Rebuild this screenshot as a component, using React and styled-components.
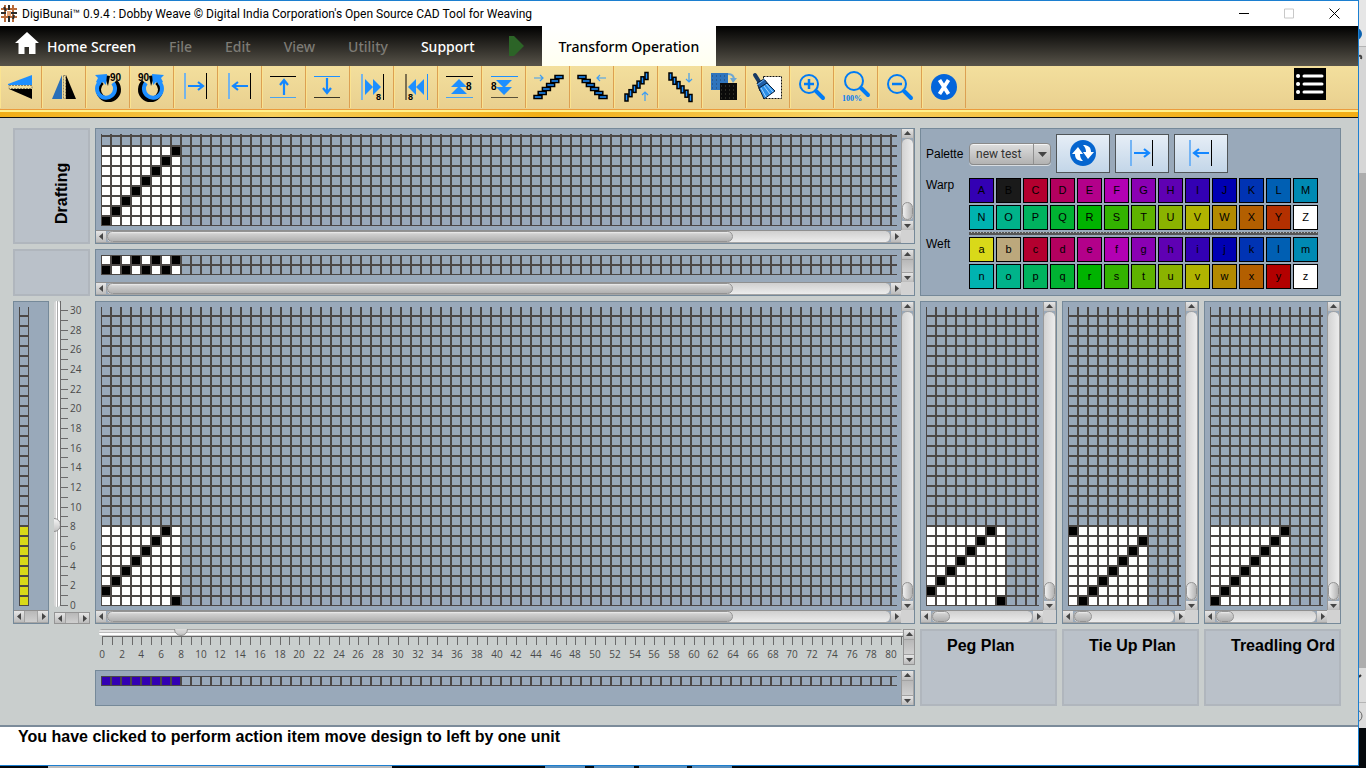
import React from "react";
import styled, { createGlobalStyle, css } from "styled-components";

const GlobalStyle = createGlobalStyle`
  *, *::before, *::after { box-sizing: border-box; }
  body { margin: 0; background: #05080c; font-family: "Open Sans", "Noto Sans", sans-serif; color: #000; }
  button, select, input { font: inherit; margin: 0; }
  svg { display: block; }
`;

const uiFont = `"Open Sans", "Noto Sans", sans-serif`;
const menuFont = `"Noto Sans", "Open Sans", sans-serif`;
const titleFont = `Roboto, "Open Sans", sans-serif`;
const arial = `"Liberation Sans", Arial, sans-serif`;
const blue = "#1e8fff";
const lightBlue = "#74b4ea";

/* ---------- window frame ---------- */

const Desktop = styled.div`
  display: grid;
  grid-template-columns: minmax(0, 1fr) 7px;
  grid-template-rows: 1fr 2px;
  min-height: 100vh;
`;

const Window = styled.div`
  display: flex;
  flex-direction: column;
  border: 1px solid #1c7fd0;
  border-left: 0;
  background: #fff;
`;

const Backdrop = styled.div`
  display: flex;
  flex-direction: column;
  background: #05080c;
`;

const BackdropBand = styled.div`
  height: ${(p) => p.$h}px;
  background: ${(p) => p.$c};
  overflow: hidden;
`;

const Taskbar = styled.div`
  grid-column: 1 / -1;
  display: flex;
  background: #05080c;
`;

const TaskbarBand = styled.div`
  width: ${(p) => p.$w}px;
  background: ${(p) => p.$c};
`;

const TitleBar = styled.header`
  display: flex;
  align-items: center;
  height: 25px;
  padding: 0 18px 0 1px;
  background: #fff;
`;

const Title = styled.h1`
  flex: 1;
  margin: 0 0 0 5px;
  font: 400 12px/16px ${titleFont};
  white-space: nowrap;
`;

const CaptionButtons = styled.div`
  display: flex;
  gap: 35px;
`;

const CaptionButton = styled.button`
  padding: 0;
  border: 0;
  background: none;
`;

/* ---------- menu bar ---------- */

const MenuBar = styled.nav`
  display: flex;
  align-items: center;
  height: 40px;
  background: linear-gradient(#000, #58544a);
`;

const MenuItem = styled.button`
  display: flex;
  align-items: center;
  gap: 8px;
  padding: 2px 0 0;
  margin-right: 33px;
  border: 0;
  background: none;
  color: ${(p) => (p.$dim ? "#7d7b75" : "#fff")};
  font: 500 14px/20px ${menuFont};
  white-space: nowrap;
`;

const MenuTab = styled.button`
  height: 40px;
  padding: 2px 17px 0;
  border: 0;
  background: linear-gradient(#fff, #fffff0);
  font: 500 14px/20px ${menuFont};
  white-space: nowrap;
`;

/* ---------- toolbar ---------- */

const ToolBar = styled.div`
  display: flex;
  height: 44px;
  border-bottom: 1px solid #eb9c3c;
  background: linear-gradient(#f3df9d, #e9d08f);
`;

const ToolButton = styled.button`
  flex: none;
  width: ${(p) => (p.$first ? 42 : 44)}px;
  height: 42px;
  padding: 0;
  border: 0;
  border-right: 1px solid #dca052;
  box-shadow: inset 1px 0 #fae391;
  background: none;
`;

const ListButton = styled.button`
  width: 32px;
  height: 32px;
  margin: 2px 32px 0 auto;
  padding: 0;
  border: 0;
  background: #000;
`;

const GoldStripe = styled.div`
  height: 8px;
  border-top: 2px solid #fff08c;
  border-bottom: 1px solid #111;
  background: linear-gradient(90deg, #f2ae16, #f7cf5a 20%, #f2ae16 40%, #f7d264 62%, #f2ae16 90%);
`;

/* ---------- work area ---------- */

const WorkArea = styled.main`
  flex: 1;
  display: grid;
  grid-template-columns: 77px minmax(0, 1fr) 421px;
  grid-template-rows: 116px 47px 323px 36px 36px;
  gap: 5px;
  padding: 10px 17px 19px 13px;
  background: #c9cecd;
`;

const LabelPanel = styled.section`
  border: 2px solid #b0b6bd;
  background: #bac1c9;
`;

const PlanLabel = styled.h2`
  margin: 5px 0 0 25px;
  font: 700 16px/20px ${arial};
  white-space: nowrap;
`;

const SideTitle = styled.h2`
  margin: 0;
  height: 100%;
  padding: 18px 37px 0 0;
  writing-mode: vertical-rl;
  transform: rotate(180deg);
  font: 700 16px/20px ${arial};
`;

const Panel = styled.section`
  display: grid;
  grid-column: ${(p) => p.$col || "auto"};
  grid-template-columns: minmax(0, 1fr) ${(p) => (p.$v ? "13px" : "")};
  grid-template-rows: minmax(0, 1fr) ${(p) => (p.$h ? "13px" : "")};
  border: 1px solid #758999;
  background: #99a9ba;
`;

const Canvas = styled.div`
  padding: 5px 4px 0 5px;
  overflow: hidden;
`;

const Corner = styled.div`
  background: #d2d2d2;
`;

const Plans = styled.div`
  display: grid;
  grid-template-columns: repeat(3, 1fr);
  gap: 5px;
  grid-row: ${(p) => p.$row};
  grid-column: 3;
`;

const LeftTools = styled.div`
  display: grid;
  grid-template-columns: 36px 36px;
  gap: 5px;
`;

const CrossRuler = styled.div`
  grid-column: 2;
  display: grid;
  grid-template-columns: minmax(0, 1fr) 12px;
`;

const DownRuler = styled.div`
  display: grid;
  grid-template-rows: 311px 12px;
`;

const DownScale = styled.div`
  display: flex;
`;

/* ---------- scroll bars ---------- */

const Bar = styled.div`
  display: flex;
  flex-direction: ${(p) => (p.$vertical ? "column" : "row")};
  min-width: 0;
  min-height: 0;
  ${(p) =>
    p.$vertical
      ? "border-left: 1px solid #9a9a9a; border-right: 1px solid #a5a5a5;"
      : "border-top: 1px solid #8f8f8f; border-bottom: 1px solid #a5a5a5;"}
  ${(p) => p.$boxed && "border: 1px solid #949494;"}
`;

const ArrowButton = styled.button`
  flex: none;
  display: grid;
  place-items: center;
  ${(p) => (p.$vertical ? "height: 9px;" : "width: 10px;")}
  padding: 0;
  border: 0;
  background: linear-gradient(#e6e6e6, #bcbcbc);
`;

const Track = styled.div`
  flex: 1;
  display: flex;
  flex-direction: ${(p) => (p.$vertical ? "column" : "row")};
  justify-content: ${(p) => (p.$end ? "flex-end" : "flex-start")};
  min-height: 0;
  border: 1px solid #a2a2a2;
  ${(p) => (p.$vertical ? "border-left: 0; border-right: 0;" : "border-top: 0; border-bottom: 0;")}
  border-radius: ${(p) => (p.$empty ? 0 : 6)}px;
  background: ${(p) =>
    p.$empty
      ? "linear-gradient(#b8b8b8, #cfcfcf)"
      : p.$vertical
      ? "linear-gradient(90deg, #d2d2d2, #ececec)"
      : "linear-gradient(#d0d0d0, #ececec)"};
`;

const Thumb = styled.div`
  ${(p) => (p.$vertical ? "height" : "width")}: ${(p) => p.$size};
  border: 1px solid #939393;
  border-radius: 6px;
  background: ${(p) =>
    p.$vertical ? "linear-gradient(90deg, #f0f0f0, #b4b4b4)" : "linear-gradient(#f0f0f0, #d0d0d0 20%, #b0b0b0)"};
`;

const arrowPaths = {
  left: "M6 1v7L2 4.500z",
  right: "M3 1v7l4-3.500z",
  up: "M1 6h7L4.500 2z",
  down: "M1 3h7L4.500 7z",
};

function Arrow({ dir, vertical }) {
  return (
    <ArrowButton type="button" aria-label={`Scroll ${dir}`} $vertical={vertical}>
      <svg width="9" height="9" viewBox="0 0 9 9">
        <path d={arrowPaths[dir]} fill="#454545" />
      </svg>
    </ArrowButton>
  );
}

function ScrollBar({ vertical, thumb, end, boxed }) {
  return (
    <Bar $vertical={vertical} $boxed={boxed}>
      <Arrow dir={vertical ? "up" : "left"} vertical={vertical} />
      <Track $vertical={vertical} $empty={!thumb} $end={end}>
        {thumb && <Thumb $vertical={vertical} $size={thumb} />}
      </Track>
      <Arrow dir={vertical ? "down" : "right"} vertical={vertical} />
    </Bar>
  );
}

/* ---------- weave charts ---------- */

const CELL = 10;

function Weave({ id, height, width = "100%", cols = 8, rows = 8, fill = "#fff", isMarked }) {
  const cells = [];
  for (let c = 0; c < cols; c += 1) {
    for (let r = 0; r < rows; r += 1) {
      cells.push(
        <rect
          key={`${c}-${r}`}
          x={c * CELL + 1}
          y={height - (r + 1) * CELL + 1}
          width="8"
          height="8"
          fill={isMarked && isMarked(c, r) ? "#000" : fill}
        />
      );
    }
  }
  return (
    <svg width={width} height={height} shapeRendering="crispEdges">
      <defs>
        <pattern id={id} width={CELL} height={CELL} y={height % CELL} patternUnits="userSpaceOnUse">
          <path d="M0 0h10v10H0zM1 1v8h8V1z" fill="#4c4846" fillRule="evenodd" />
        </pattern>
      </defs>
      <rect width="100%" height={height} fill={`url(#${id})`} />
      {cells}
    </svg>
  );
}

/* ---------- rulers ---------- */

const sliderBase = css`
  appearance: none;
  display: block;
  overflow: hidden;
  border-radius: 4px;
  &::-webkit-slider-thumb {
    appearance: none;
    width: 14px;
    height: 14px;
    border: 1px solid #8f8f8f;
    border-radius: 50%;
    background: linear-gradient(#f4f4f4, #c4c4c4);
  }
`;

const CrossSlider = styled.input`
  ${sliderBase}
  width: calc(100% - 4px);
  height: 7px;
  margin-left: 4px;
  background: linear-gradient(#a5a5a5 1px, #e4e4e4 1px 3px, #bbb 3px 4px, #fff 4px 6px, #d0d0d0 6px);
  &::-webkit-slider-thumb { margin-top: -7px; }
`;

const DownSlider = styled.input`
  ${sliderBase}
  writing-mode: vertical-lr;
  direction: rtl;
  width: 6px;
  height: 306px;
  background: linear-gradient(90deg, #d8d8d8 2px, #fff 2px 3px, #aaa 3px 4px, #fff 4px);
  &::-webkit-slider-thumb { margin-left: -7px; }
`;

const ScaleText = styled.text`
  font: 400 10px ${uiFont};
  fill: #4a4a4a;
`;

function CrossScale() {
  const ticks = Array.from({ length: 82 }, (_, i) => i);
  const at = (i) => Math.round((i * 789) / 80) + 7;
  return (
    <svg width="100%" height="29" shapeRendering="crispEdges">
      <rect x="7" width="801" height="1" fill="#6a6a6a" />
      {ticks.map((i) => (
        <rect key={i} x={at(i)} width="1" height="9" fill="#6a6a6a" />
      ))}
      {ticks
        .filter((i) => i % 2 === 0)
        .map((i) => (
          <ScaleText key={i} x={at(i)} y="22" textAnchor="middle">
            {i}
          </ScaleText>
        ))}
    </svg>
  );
}

function DownTicks() {
  const ticks = Array.from({ length: 31 }, (_, i) => i);
  const at = (i) => 304 - Math.round((i * 295) / 30);
  return (
    <svg width="30" height="311" shapeRendering="crispEdges">
      <rect width="1" height="305" fill="#6a6a6a" />
      {ticks.map((i) => (
        <rect key={i} y={at(i)} width="8" height="1" fill="#6a6a6a" />
      ))}
      {ticks
        .filter((i) => i % 2 === 0)
        .map((i) => (
          <ScaleText key={i} x="10" y={at(i) + 4}>
            {i}
          </ScaleText>
        ))}
    </svg>
  );
}

/* ---------- palette ---------- */

const PalettePanel = styled.section`
  grid-column: 3;
  grid-row: 1 / 3;
  display: grid;
  grid-template-columns: 43px minmax(0, 1fr);
  align-content: start;
  padding: 5px 0 0 5px;
  border: 1px solid #758999;
  background: #99a9ba;
  font: 400 12px/14px ${arial};
`;

const PaletteLabel = styled.label`
  padding-top: ${(p) => p.$top}px;
`;

const PaletteControls = styled.div`
  display: flex;
  align-items: center;
  gap: 5px;
  height: 44px;
  padding-bottom: 5px;
`;

const SelectBox = styled.div`
  display: grid;
  grid-template-columns: 1fr 17px;
  align-items: center;
  width: 82px;
  height: 22px;
  border: 1px solid #8a8a8a;
  border-radius: 4px;
  box-shadow: 0 1px #d8dde2, inset 0 1px #f4f4f4;
  background: linear-gradient(#dedede, #b2b2b2);
`;

const Select = styled.select`
  appearance: none;
  grid-area: 1 / 1 / 2 / 3;
  width: 100%;
  height: 20px;
  padding: 1px 0 0 6px;
  border: 0;
  background: none;
  color: #333;
  font: 400 12px/18px ${titleFont};
`;

const SelectArrow = styled.span`
  grid-area: 1 / 2;
  height: 20px;
  padding: 8px 0 0 4px;
  border-left: 1px solid #8f8f8f;
  pointer-events: none;
`;

const PaletteButton = styled.button`
  display: grid;
  place-items: center;
  width: 54px;
  height: 39px;
  padding: 0;
  border: 1px solid #505558;
  background: linear-gradient(#e6eef7, #c3d6e8);
`;

const Swatches = styled.div`
  display: grid;
  grid-template-columns: repeat(13, 25px);
  gap: 2px;
`;

const Swatch = styled.button`
  height: 25px;
  padding: 0;
  border: 1px solid #000;
  background: ${(p) => p.$c};
  color: #000;
  font: 400 11px/13px ${arial};
`;

const Divider = styled.hr`
  grid-column: 2;
  width: 349px;
  height: 3px;
  margin: 2px 0;
  border: 0;
  background: repeating-linear-gradient(90deg, #555 0 2px, #b4b8b4 2px 3px) 0 0 / 100% 1px no-repeat, #555;
`;

const warpColors = [
  "#3300b3", "#1a1a1a", "#b3002f", "#b3005f", "#b3008a", "#b300b3", "#8a00b3", "#5f00b3", "#3300b3",
  "#0000b3", "#0033b3", "#005fb3", "#008ab3", "#00b3b0", "#00b38a", "#00b35f", "#00b333", "#00b300",
  "#33b300", "#5fb300", "#8ab300", "#b0b300", "#b38a00", "#b35f00", "#b33000", "#ffffff",
];
const weftColors = warpColors.map((c, i) => ({ 0: "#d9d919", 1: "#bca87c", 24: "#b30000" }[i] || c));
const letters = "ABCDEFGHIJKLMNOPQRSTUVWXYZ".split("");

/* ---------- status ---------- */

const Status = styled.footer`
  height: 40px;
  padding: 0 18px;
  border-top: 2px solid #7b8b9a;
  background: #fff;
  font: 700 16px/20px ${arial};
`;

/* ---------- icons ---------- */

const IconText = styled.text`
  font: 700 ${(p) => p.$size || 9}px ${(p) => (p.$serif ? `"Liberation Serif", serif` : arial)};
`;

const Rotate = () => (
  <>
    <path d="M29 16a10 10 0 1 1-13 0" fill="none" stroke="#000" strokeWidth="5" />
    <path d="M18 9l6 1-2 10z" fill="#000" />
    <path d="M27 17a9 9 0 1 1-13-1" fill="none" stroke={blue} strokeWidth="4" />
    <path d="M9 9l12-1-1 11-3-3-4 2-3-2 2-4z" fill={blue} />
  </>
);

const Bricks = ({ x, y, dx, dy, w, h }) => (
  <g fill={blue} stroke="#000" strokeWidth="1.500">
    {[0, 1, 2, 3, 4, 5].map((i) => (
      <rect key={i} x={x + dx * i} y={y + dy * i} width={w} height={h} />
    ))}
  </g>
);

const SmallArrow = ({ x, y, turn }) => (
  <path
    d="M-5 0H4M1-3l3 3-3 3"
    transform={`translate(${x} ${y}) rotate(${turn})`}
    fill="none"
    stroke="#3d9df2"
    strokeWidth="1.200"
  />
);

const BigArrow = ({ x, y, turn }) => (
  <path
    d="M-8 0H6M2-4l5 4-5 4"
    transform={`translate(${x} ${y}) rotate(${turn})`}
    fill="none"
    stroke="#1487ff"
    strokeWidth="2.200"
  />
);

const Lens = ({ x, y, children }) => (
  <g transform={`translate(${x} ${y})`} fill="none" stroke="#007bf5" strokeWidth="2">
    <circle r="9" />
    <path d="M7 7l7 7" strokeWidth="4" strokeLinecap="round" />
    {children}
  </g>
);

const tools = [
  [
    "Vertical mirror",
    <>
      <path d="M10 18l24-9v10H10z" fill={blue} />
      <path d="M11 23h23v10z" fill="#000" />
      <path d="M11 19.500h23v3H11z" fill="#f1dc9a" stroke="#8b8368" strokeDasharray="2 1" />
    </>,
  ],
  [
    "Horizontal mirror",
    <>
      <path d="M10 33L20 9v24z" fill="#2a6fb8" />
      <path d="M24 9l10 24H24z" fill="#000" />
      <path d="M21.500 9.500h2v23h-2z" fill="#f1dc9a" stroke="#8b8368" strokeDasharray="2 1" />
    </>,
  ],
  [
    "Rotate clockwise",
    <>
      <Rotate />
      <IconText x="24" y="15" $size={10}>90</IconText>
    </>,
  ],
  [
    "Rotate anticlockwise",
    <>
      <g transform="translate(43 0) scale(-1 1)"><Rotate /></g>
      <IconText x="8" y="15" $size={10}>90</IconText>
    </>,
  ],
  [
    "Move right",
    <>
      <path d="M11 7v26" stroke={lightBlue} strokeWidth="2" />
      <path d="M32.500 7v26" stroke="#000" />
      <BigArrow x={22} y={20} turn={0} />
    </>,
  ],
  [
    "Move left",
    <>
      <path d="M11 7v26" stroke={lightBlue} strokeWidth="2" />
      <path d="M32.500 7v26" stroke="#000" />
      <BigArrow x={22} y={20} turn={180} />
    </>,
  ],
  [
    "Move up",
    <>
      <path d="M8 10.500h26" stroke="#000" />
      <path d="M8 31.500h26" stroke="#4aa3ee" />
      <BigArrow x={22} y={21} turn={-90} />
    </>,
  ],
  [
    "Move down",
    <>
      <path d="M8 10.500h26" stroke={blue} />
      <path d="M8 31.500h26" stroke="#3a3526" />
      <BigArrow x={21} y={20} turn={90} />
    </>,
  ],
  [
    "Move right by 8",
    <>
      <path d="M12 8v26" stroke={lightBlue} strokeWidth="2" />
      <path d="M33.500 8v26" stroke="#000" />
      <path d="M15 13l8 8-8 8zM23 13l8 8-8 8z" fill={blue} />
      <IconText x="26" y="34" $size={9}>8</IconText>
    </>,
  ],
  [
    "Move left by 8",
    <>
      <path d="M12 8v26" stroke="#7d7050" strokeWidth="2" />
      <path d="M33.500 8v26" stroke={blue} />
      <path d="M22 13l-8 8 8 8zM30 13l-8 8 8 8z" fill={blue} />
      <IconText x="14" y="34" $size={9}>8</IconText>
    </>,
  ],
  [
    "Move up by 8",
    <>
      <path d="M8 10.500h27" stroke="#000" />
      <path d="M8 31.500h27" stroke="#4aa3ee" />
      <path d="M13 21l8-8 8 8zM13 28l8-8 8 8z" fill={blue} />
      <IconText x="28" y="24" $size={10}>8</IconText>
    </>,
  ],
  [
    "Move down by 8",
    <>
      <path d="M9 10.500h27" stroke={blue} />
      <path d="M9 31.500h27" stroke="#5a5138" />
      <path d="M14 14l8 8 8-8zM14 21l8 8 8-8z" fill={blue} />
      <IconText x="9" y="24" $size={10}>8</IconText>
    </>,
  ],
  ["Tilt right", <><Bricks x={8} y={29.5} dx={4.2} dy={-4} w={8} h={3} /><SmallArrow x={13} y={12} turn={0} /></>],
  ["Tilt left", <><Bricks x={8} y={9.5} dx={4.2} dy={4} w={8} h={3} /><SmallArrow x={31} y={12} turn={180} /></>],
  ["Tilt up", <><Bricks x={11} y={28} dx={4} dy={-4.3} w={3} h={7} /><SmallArrow x={31} y={30} turn={-90} /></>],
  ["Tilt down", <><Bricks x={11} y={7} dx={4} dy={4.3} w={3} h={7} /><SmallArrow x={31} y={12} turn={90} /></>],
  [
    "Inversion",
    <>
      <path d="M9 7h17v17H9z" fill="#2f74bd" />
      <path d="M10 10h14M10 14h14M10 18h14M10 22h10" stroke="#24456c" strokeDasharray="1 3" />
      <path d="M18 17h17v17H18z" fill="#0a0a0a" />
      <path d="M19 20h15M19 24h15M19 28h15M19 32h15" stroke="#4a4a3e" strokeDasharray="1 3" />
      <path d="M26 8c4 0 6 2 6 6" fill="none" stroke="#6ea6d2" strokeWidth="2" />
      <path d="M28 12h7l-4 5z" fill="#6ea6d2" />
    </>,
  ],
  [
    "Clear",
    <>
      <path d="M17.500 10.500h18v22h-18z" fill="#fff" stroke="#111" strokeDasharray="2 1" />
      <path d="M9 9l5 8" stroke="#173a63" strokeWidth="4" strokeLinecap="round" />
      <path d="M11 17l7-4 5 6-9 6z" fill="#1f5fa8" stroke="#0b1f38" />
      <path d="M13 22l8-5 8 8-11 8z" fill="#2c8ee6" stroke="#0b1f38" />
      <path d="M15 22l5 9M18 20l6 8M20 18l7 8" stroke="#a4d4ff" />
      <path d="M11 19l8-6" stroke="#69b0f5" />
    </>,
  ],
  ["Zoom in", <Lens x={19} y={18}><path d="M-5 0H5M0-5V5" strokeWidth="2.500" /></Lens>],
  [
    "Zoom normal",
    <>
      <Lens x={20} y={15} />
      <path d="M8 26h18v10H8z" fill="#ecd594" />
      <IconText x="8" y="35" fill="#007bf5" $size={8} $serif>100%</IconText>
    </>,
  ],
  ["Zoom out", <Lens x={19} y={18}><path d="M-5 0H5" strokeWidth="2.500" /></Lens>],
  [
    "Close",
    <>
      <circle cx="22" cy="21" r="13" fill="#0465db" />
      <path d="M17.500 14l9 14M26.500 14l-9 14" stroke="#fff" strokeWidth="3.800" />
    </>,
  ],
];

const ShiftIcon = ({ turn }) => (
  <svg width="52" height="37">
    <path d="M15 5v26" stroke="#74b4f4" strokeWidth="2" />
    <path d="M36.500 5v26" stroke="#000" />
    <BigArrow x={26} y={18} turn={turn} />
  </svg>
);

const warpWeave = (c, r) => r === (c + 1) % 8;
const diagonal = (c, r) => r === c;
const plans = [
  ["peg", "Peg Plan", warpWeave],
  ["tie", "Tie Up Plan", (c, r) => r === (c + 7) % 8],
  ["treadling", "Treadling Ord", diagonal],
];
const menus = ["File", "Edit", "View", "Utility"];

export default function App() {
  return (
    <Desktop>
      <GlobalStyle />
      <Window>
        <TitleBar>
          <svg width="16" height="17" viewBox="0 0 16 17">
            <path d="M4 0v17M12 0v17M0 4h16M0 12h16" stroke="#b86a3a" strokeWidth="2" />
            <path d="M8 0v5M8 10v7M0 8h5M10 8h6M3 2l2 4M13 10l-1 4" stroke="#2b2b2b" strokeWidth="2" />
            <path d="M6 6h4v5H6z" fill="#e3a477" />
          </svg>
          <Title>DigiBunai™ 0.9.4 : Dobby Weave © Digital India Corporation's Open Source CAD Tool for Weaving</Title>
          <CaptionButtons>
            <CaptionButton type="button" aria-label="Minimize">
              <svg width="10" height="11"><path d="M0 5.500h10" stroke="#000" /></svg>
            </CaptionButton>
            <CaptionButton type="button" aria-label="Maximize" disabled>
              <svg width="10" height="11"><path d="M.5 1h9v9h-9z" fill="none" stroke="#c8c8c8" /></svg>
            </CaptionButton>
            <CaptionButton type="button" aria-label="Close">
              <svg width="11" height="11"><path d="M.5.5l10 10M10.500.5l-10 10" stroke="#000" /></svg>
            </CaptionButton>
          </CaptionButtons>
        </TitleBar>

        <MenuBar>
          <MenuItem type="button">
            <svg width="39" height="30" viewBox="0 0 39 30">
              <path d="M27 0l12 11h-3.500v11H29v-7h-4.500v7H18.500V11H15z" fill="#fff" />
            </svg>
            Home Screen
          </MenuItem>
          {menus.map((m) => (
            <MenuItem key={m} type="button" $dim>{m}</MenuItem>
          ))}
          <MenuItem type="button">Support</MenuItem>
          <svg width="34" height="20"><path d="M1 0h5l10 10L6 20H1z" fill="#2c6427" /></svg>
          <MenuTab type="button">Transform Operation</MenuTab>
        </MenuBar>

        <ToolBar>
          {tools.map(([name, art], i) => (
            <ToolButton key={name} type="button" aria-label={name} $first={i === 0}>
              <svg width={i === 0 ? 41 : 43} height="42" viewBox={i === 0 ? "2 0 41 42" : "0 0 43 42"}>{art}</svg>
            </ToolButton>
          ))}
          <ListButton type="button" aria-label="List">
            <svg width="32" height="32">
              <path d="M10 8h18M10 16h18M10 24h18" stroke="#fff" strokeWidth="3" strokeLinecap="round" />
              <path d="M4 8h.1M4 16h.1M4 24h.1" stroke="#fff" strokeWidth="4" strokeLinecap="round" />
            </svg>
          </ListButton>
        </ToolBar>
        <GoldStripe />

        <WorkArea>
          <LabelPanel><SideTitle>Drafting</SideTitle></LabelPanel>
          <Panel $v $h>
            <Canvas><Weave id="drafting" height={92} isMarked={diagonal} /></Canvas>
            <ScrollBar vertical thumb="18px" end />
            <ScrollBar thumb="80%" />
            <Corner />
          </Panel>
          <PalettePanel>
            <PaletteLabel htmlFor="palette" $top={13}>Palette</PaletteLabel>
            <PaletteControls>
              <SelectBox>
                <Select id="palette" defaultValue="new test"><option>new test</option></Select>
                <SelectArrow><svg width="9" height="5"><path d="M0 0h9L4.500 5z" fill="#444" /></svg></SelectArrow>
              </SelectBox>
              <PaletteButton type="button" aria-label="Swap palette">
                <svg width="52" height="37">
                  <circle cx="26" cy="18" r="13" fill="#0565cf" />
                  <path d="M15 19l6-7 5 7h-3c0 3 1 5 3 7-5 0-8-2-8-7zM37 17l-6 7-5-7h3c0-3-1-5-3-7 5 0 8 2 8 7z" fill="#fff" />
                </svg>
              </PaletteButton>
              <PaletteButton type="button" aria-label="Shift right"><ShiftIcon turn={0} /></PaletteButton>
              <PaletteButton type="button" aria-label="Shift left"><ShiftIcon turn={180} /></PaletteButton>
            </PaletteControls>
            <PaletteLabel as="span" $top={0}>Warp</PaletteLabel>
            <Swatches>
              {letters.map((l, i) => <Swatch key={l} type="button" $c={warpColors[i]}>{l}</Swatch>)}
            </Swatches>
            <Divider />
            <PaletteLabel as="span" $top={0}>Weft</PaletteLabel>
            <Swatches>
              {letters.map((l, i) => <Swatch key={l} type="button" $c={weftColors[i]}>{l.toLowerCase()}</Swatch>)}
            </Swatches>
          </PalettePanel>

          <LabelPanel />
          <Panel $v $h>
            <Canvas><Weave id="denting" height={20} rows={2} isMarked={(c, r) => (c + r) % 2 === 0} /></Canvas>
            <ScrollBar vertical />
            <ScrollBar thumb="80%" />
            <Corner />
          </Panel>

          <LeftTools>
            <Panel $h>
              <Canvas><Weave id="weft" width={10} height={299} cols={1} fill="#d9d919" /></Canvas>
              <ScrollBar />
            </Panel>
            <DownRuler>
              <DownScale>
                <DownSlider type="range" aria-label="Weft count" min="0" max="31" defaultValue="8" />
                <DownTicks />
              </DownScale>
              <ScrollBar boxed />
            </DownRuler>
          </LeftTools>
          <Panel $v $h>
            <Canvas><Weave id="design" height={299} isMarked={warpWeave} /></Canvas>
            <ScrollBar vertical thumb="18px" end />
            <ScrollBar thumb="80%" />
            <Corner />
          </Panel>
          <Plans $row="3">
            {plans.map(([id, name, mark]) => (
              <Panel key={id} $v $h aria-label={name}>
                <Canvas><Weave id={id} height={299} isMarked={mark} /></Canvas>
                <ScrollBar vertical thumb="18px" end />
                <ScrollBar thumb="18px" />
                <Corner />
              </Panel>
            ))}
          </Plans>

          <CrossRuler>
            <div>
              <CrossSlider type="range" aria-label="Warp count" min="0" max="84" defaultValue="8" />
              <CrossScale />
            </div>
            <ScrollBar vertical boxed />
          </CrossRuler>
          <Plans $row="4 / 6">
            {plans.map(([id, name]) => (
              <LabelPanel key={id}><PlanLabel>{name}</PlanLabel></LabelPanel>
            ))}
          </Plans>
          <Panel $v $col="2">
            <Canvas><Weave id="warp" height={10} rows={1} fill="#3300b3" /></Canvas>
            <ScrollBar vertical />
          </Panel>
        </WorkArea>

        <Status>You have clicked to perform action item move design to left by one unit</Status>
      </Window>
      <Backdrop>
        <BackdropBand $h={46} $c="#e6e6e6">
          <svg width="7" height="46"><circle cx="-3" cy="34" r="6" fill="#0b62b0" /></svg>
        </BackdropBand>
        <BackdropBand $h={1} $c="#b4b4b4" />
        <BackdropBand $h={126} $c="#d6d6d6">
          <svg width="7" height="16"><path d="M0 9q3-1 2 3" fill="none" stroke="#444" strokeWidth="2" /></svg>
        </BackdropBand>
        <BackdropBand $h={495} $c="#adadad" />
        <BackdropBand $h={60} $c="#dcdcdc">
          <svg width="7" height="60">
            <path d="M0 9l2-2" stroke="#333" strokeWidth="2" />
            <path d="M0 34.500h7" stroke="#b5b5b5" />
            <circle cx="-3" cy="48" r="6" fill="none" stroke="#666" />
          </svg>
        </BackdropBand>
      </Backdrop>
      <Taskbar>
        <TaskbarBand $w={48} $c="#05080c" />
        <TaskbarBand $w={344} $c="#bdbdbd" />
        <TaskbarBand $w={153} $c="#05080c" />
        <TaskbarBand $w={40} $c="#5a8fbd" />
        <TaskbarBand $w={9} $c="#05080c" />
        <TaskbarBand $w={40} $c="#5a8fbd" />
        <TaskbarBand $w={5} $c="#05080c" />
        <TaskbarBand $w={48} $c="#5a8fbd" />
        <TaskbarBand $w={5} $c="#05080c" />
        <TaskbarBand $w={40} $c="#5a8fbd" />
      </Taskbar>
    </Desktop>
  );
}
